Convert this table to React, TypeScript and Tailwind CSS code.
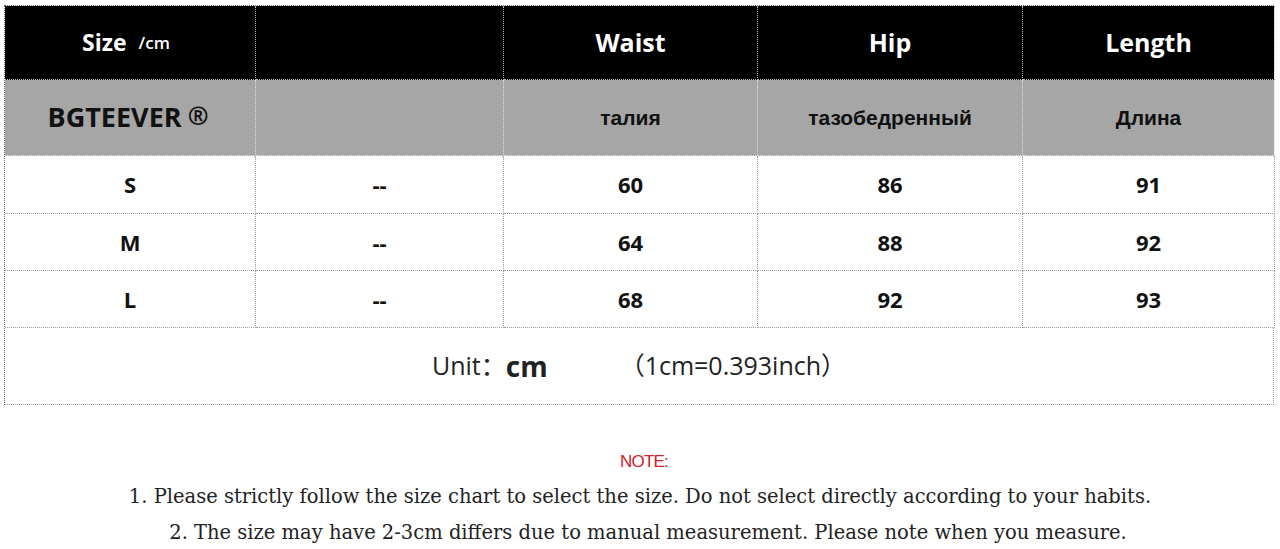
import React from 'react';

const cols = 'grid grid-cols-[251px_248px_254px_265px_252px]';
const cell = 'flex items-center justify-center border-r border-b border-dotted border-[#9a9a9a]';

const rows = [
  { size: 'S', waist: '60', hip: '86', length: '91' },
  { size: 'M', waist: '64', hip: '88', length: '92' },
  { size: 'L', waist: '68', hip: '92', length: '93' },
];

const App: React.FC = () => {
  return (
    <div className="w-[1280px] h-[549px] bg-white overflow-hidden pt-[5px] px-[4px]">
      {/* Size table */}
      <div className="w-[1270px] border-l border-t border-dotted border-[#6a6a6a] font-['Open_Sans',sans-serif]">
        <div className={`${cols} h-[74px] bg-black text-white`}>
          <div className={`${cell} border-[#bdbdbd] gap-[12px] pr-[8px]`}>
            <span className="text-[23px] font-bold">Size</span>
            <span className="text-[17px] font-semibold">/cm</span>
          </div>
          <div className={`${cell} border-[#bdbdbd]`} />
          <div className={`${cell} border-[#bdbdbd] text-[25px] font-bold`}>Waist</div>
          <div className={`${cell} border-[#bdbdbd] text-[25px] font-bold`}>Hip</div>
          <div className={`${cell} border-[#bdbdbd] text-[25px] font-bold`}>Length</div>
        </div>

        <div className={`${cols} h-[76px] bg-[#a6a6a6] text-[#111]`}>
          <div className={`${cell} border-[#e0e0e0] pr-[4px] gap-[6px]`}>
            <span className="text-[27px] font-bold">BGTEEVER</span>
            <span className="text-[25px] font-bold -mt-[4px]">®</span>
          </div>
          <div className={`${cell} border-[#e0e0e0]`} />
          <div className={`${cell} border-[#e0e0e0] text-[21px] font-bold font-['Liberation_Sans',sans-serif]`}>талия</div>
          <div className={`${cell} border-[#e0e0e0] text-[21px] font-bold font-['Liberation_Sans',sans-serif]`}>тазобедренный</div>
          <div className={`${cell} border-[#e0e0e0] text-[21px] font-bold font-['Liberation_Sans',sans-serif]`}>Длина</div>
        </div>

        {rows.map((r, i) => (
          <div key={r.size} className={`${cols} ${i === 0 ? 'h-[58px]' : 'h-[57px]'} text-[22px] font-bold text-[#111]`}>
            <div className={cell}>{r.size}</div>
            <div className={cell}>--</div>
            <div className={cell}>{r.waist}</div>
            <div className={cell}>{r.hip}</div>
            <div className={cell}>{r.length}</div>
          </div>
        ))}

        <div className="h-[77px] flex items-center justify-center border-r border-b border-dotted border-[#9a9a9a] text-[#222] font-['Open_Sans','Noto_Sans_CJK_SC',sans-serif]">
          <span className="text-[25px]">Unit：</span>
          <span className="text-[28px] font-bold">cm</span>
          <span className="text-[25px] ml-[72px]">（1cm=0.393inch）</span>
        </div>
      </div>

      {/* Notes */}
      <div className="flex flex-col items-center mt-[44px]">
        <p className="text-[17px] text-[#d0202a] font-['Liberation_Sans',sans-serif] tracking-[-0.8px] pl-[8px]">NOTE:</p>
        <p className="mt-[7px] text-[19.5px] text-[#222] font-['DejaVu_Serif',serif]">
          1. Please strictly follow the size chart to select the size. Do not select directly according to your habits.
        </p>
        <p className="mt-[7px] text-[19.5px] text-[#222] font-['DejaVu_Serif',serif] pl-[16px]">
          2. The size may have 2-3cm differs due to manual measurement. Please note when you measure.
        </p>
      </div>
    </div>
  );
};

export default App;
